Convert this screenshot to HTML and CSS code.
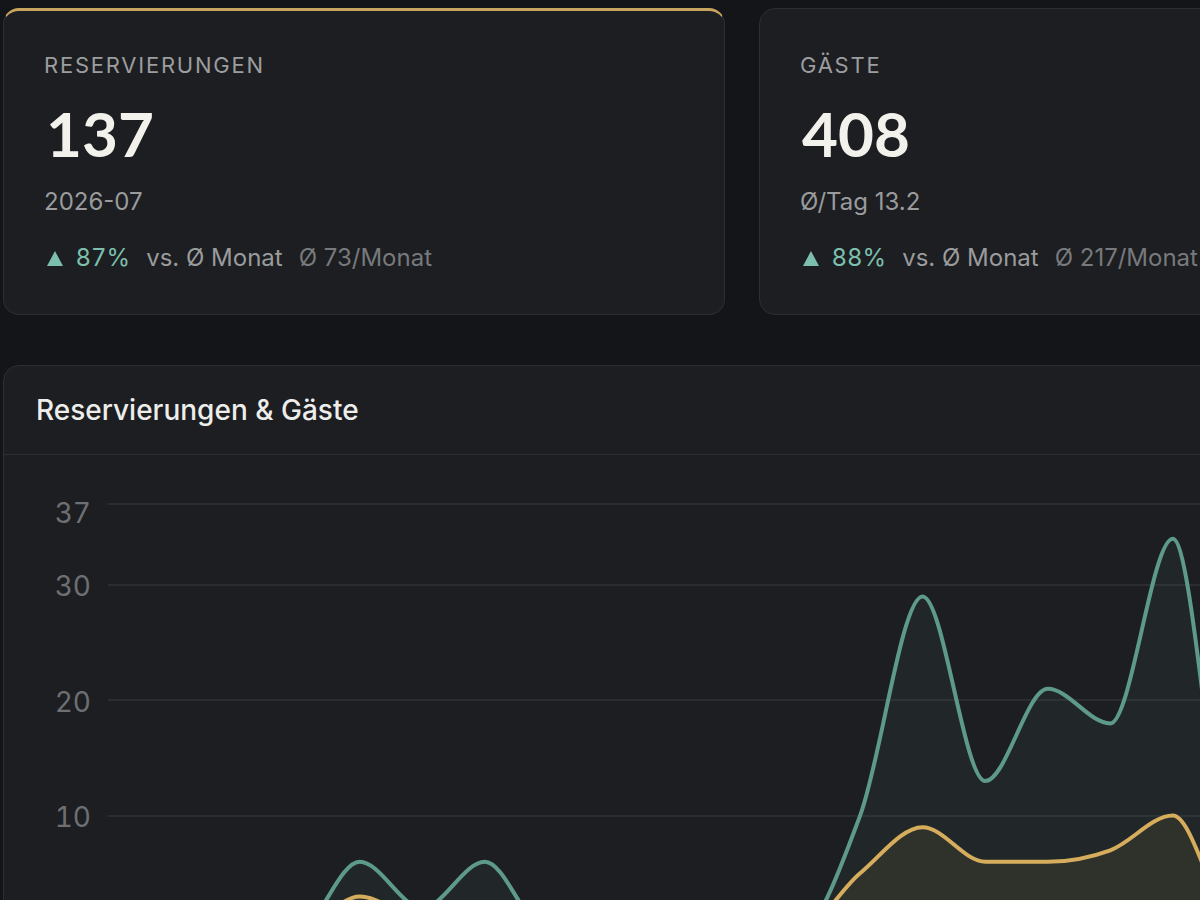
FILE: index.html
```html
<!DOCTYPE html>
<html lang="de">
<head>
  <meta charset="UTF-8" />
  <meta name="viewport" content="width=device-width, initial-scale=1" />
  <title>Dashboard – Juli 2026</title>
  <link rel="stylesheet" href="styles.css">
</head>
<body>
  <div class="stats">
    <div class="stat-card stat-card--active">
      <div class="stat-label">Reservierungen</div>
      <div class="stat-value">137</div>
      <div class="stat-sub">2026-07</div>
      <div class="stat-delta">
        <span class="delta-up">
          <svg class="delta-icon" width="16" height="15" viewBox="0 0 16 15"><polygon points="8,0 16,15 0,15" /></svg>
          87%
        </span>
        <span class="delta-text">vs. Ø Monat</span>
        <span class="delta-avg">Ø 73/Monat</span>
      </div>
    </div>

    <div class="stat-card">
      <div class="stat-label">Gäste</div>
      <div class="stat-value">408</div>
      <div class="stat-sub">Ø/Tag 13.2</div>
      <div class="stat-delta">
        <span class="delta-up">
          <svg class="delta-icon" width="16" height="15" viewBox="0 0 16 15"><polygon points="8,0 16,15 0,15" /></svg>
          88%
        </span>
        <span class="delta-text">vs. Ø Monat</span>
        <span class="delta-avg">Ø 217/Monat</span>
      </div>
    </div>
  </div>

  <div class="chart-card">
    <div class="chart-header">Reservierungen &amp; Gäste</div>
    <svg class="chart" id="chart" width="1476" height="460" viewBox="4 455 1476 460">
      <g class="grid">
        <line x1="108" x2="1480" y1="504" y2="504" />
        <line x1="108" x2="1480" y1="585" y2="585" />
        <line x1="108" x2="1480" y1="700" y2="700" />
        <line x1="108" x2="1480" y1="816" y2="816" />
      </g>
      <g class="axis">
        <text x="91" y="523">37</text>
        <text x="91" y="596">30</text>
        <text x="91" y="712">20</text>
        <text x="91" y="827">10</text>
      </g>
      <path id="guests-area" class="area-guests" />
      <path id="res-area" class="area-res" />
      <path id="guests-line" class="line-guests" />
      <path id="res-line" class="line-res" />
    </svg>
  </div>

  <script>
    // Juli 2026, pro Tag
    const guests = [2,0,0,0,6,2,6,0,0,0,0,0,10,29,13,21,18,34,5,12,26,31,20,37,24,8,15,22,28,19,20];
    const reservations = [1,0,0,0,3,1,2,0,0,0,0,0,5,9,6,6,7,10,1,4,8,10,7,12,8,3,5,7,9,6,7];

    const x0 = 109.5, step = 62.55;
    const base = 931, perUnit = 11.535;

    function toPoints(values) {
      return values.map((v, i) => [x0 + i * step, base - v * perUnit]);
    }

    // monotone x interpolation
    function slopes(pts) {
      const n = pts.length;
      const m = new Array(n).fill(0);
      for (let i = 1; i < n - 1; i++) {
        const h0 = pts[i][0] - pts[i - 1][0], h1 = pts[i + 1][0] - pts[i][0];
        const s0 = (pts[i][1] - pts[i - 1][1]) / h0;
        const s1 = (pts[i + 1][1] - pts[i][1]) / h1;
        const p = (s0 * h1 + s1 * h0) / (h0 + h1);
        m[i] = (Math.sign(s0) + Math.sign(s1)) * Math.min(Math.abs(s0), Math.abs(s1), 0.5 * Math.abs(p)) || 0;
      }
      const hs = pts[1][0] - pts[0][0];
      m[0] = (3 * (pts[1][1] - pts[0][1]) / hs - m[1]) / 2;
      const he = pts[n - 1][0] - pts[n - 2][0];
      m[n - 1] = (3 * (pts[n - 1][1] - pts[n - 2][1]) / he - m[n - 2]) / 2;
      return m;
    }

    function linePath(pts) {
      const m = slopes(pts);
      let d = `M${pts[0][0].toFixed(1)},${pts[0][1].toFixed(1)}`;
      for (let i = 0; i < pts.length - 1; i++) {
        const [xa, ya] = pts[i], [xb, yb] = pts[i + 1];
        const dx = (xb - xa) / 3;
        d += `C${(xa + dx).toFixed(1)},${(ya + dx * m[i]).toFixed(1)},${(xb - dx).toFixed(1)},${(yb - dx * m[i + 1]).toFixed(1)},${xb.toFixed(1)},${yb.toFixed(1)}`;
      }
      return d;
    }

    function draw(values, lineId, areaId) {
      const pts = toPoints(values);
      const d = linePath(pts);
      document.getElementById(lineId).setAttribute('d', d);
      const last = pts[pts.length - 1][0].toFixed(1);
      document.getElementById(areaId).setAttribute('d', `${d}L${last},${base}L${x0},${base}Z`);
    }

    draw(guests, 'guests-line', 'guests-area');
    draw(reservations, 'res-line', 'res-area');
  </script>
</body>
</html>
```

FILE: styles.css
```css
* {
  box-sizing: border-box;
}

html, body {
  overflow: hidden;
}

body {
  margin: 0;
  padding: 8px 0 0 3px;
  background: #141519;
  font-family: Inter, "Noto Sans", sans-serif;
  color: #ecebe7;
  width: 1600px;
}

.stats {
  display: grid;
  grid-template-columns: 722px 722px;
  column-gap: 34px;
}

.stat-card {
  background: #1c1e21;
  border: 1px solid #2c2e32;
  border-radius: 16px;
  padding: 42px 40px 40px;
  height: 307px;
}

.stat-card--active {
  border-top: 3px solid #c9a45e;
  padding-top: 40px;
}

.stat-label {
  font-size: 22px;
  line-height: 28px;
  letter-spacing: 0.08em;
  text-transform: uppercase;
  color: #9c9d9f;
}

.stat-value {
  margin: 18px 0 0 2px;
  font-family: Lato, Inter, sans-serif;
  font-size: 62px;
  line-height: 72px;
  font-weight: 700;
  color: #f3f1ec;
}

.stat-sub {
  margin-top: 18px;
  font-size: 24px;
  line-height: 30px;
  color: #9a9b9d;
}

.stat-delta {
  margin-top: 26px;
  display: flex;
  align-items: baseline;
  gap: 16px;
  font-size: 24px;
  line-height: 30px;
}

.delta-up {
  color: #7cbfae;
  font-variant-numeric: tabular-nums;
}

.delta-icon {
  fill: #7cbfae;
  margin: 0 6px 0 3px;
}

.delta-text {
  color: #9a9b9d;
}

.delta-avg {
  color: #78797c;
}

.chart-card {
  margin-top: 50px;
  width: 1478px;
  background: #1c1e21;
  border: 1px solid #2c2e32;
  border-radius: 16px;
  overflow: hidden;
}

.chart-header {
  padding: 28px 32px;
  font-size: 28px;
  line-height: 32px;
  font-weight: 500;
  color: #ededeb;
  border-bottom: 1px solid #2c2e32;
}

.chart {
  display: block;
}

.grid line {
  stroke: #2a2c30;
  stroke-width: 2;
}

.axis text {
  font-family: Inter, "Noto Sans", sans-serif;
  font-variant-numeric: tabular-nums;
  font-size: 28px;
  fill: #6d6f73;
  text-anchor: end;
}

.area-guests {
  fill: rgba(94, 154, 139, 0.07);
}

.area-res {
  fill: rgba(214, 173, 92, 0.08);
}

.line-guests,
.line-res {
  fill: none;
  stroke-width: 4;
  stroke-linejoin: round;
  stroke-linecap: round;
}

.line-guests {
  stroke: #5e9a8b;
}

.line-res {
  stroke: #d6ad5c;
}
```
